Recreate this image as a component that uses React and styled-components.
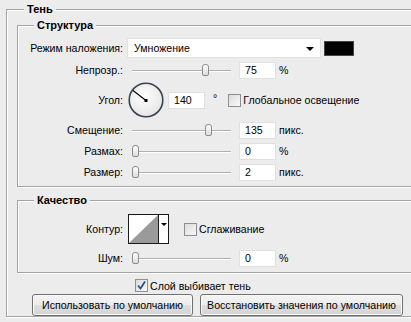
import React from 'react';
import styled, { createGlobalStyle } from 'styled-components';

const GlobalStyle = createGlobalStyle`
  html, body { margin: 0; padding: 0; background: #ececec; }
  body {
    font-family: "Liberation Sans", Arial, sans-serif;
    font-size: 10.6px;
    color: #000;
  }
`;

const Dialog = styled.div`
  width: 411px;
  height: 322px;
  overflow: hidden;
  box-sizing: border-box;
  padding: 2px 0 0 6px;
  background: #ececec;
`;

const Group = styled.fieldset`
  margin: ${p => p.$mt || 0}px 0 0 0;
  padding: ${p => p.$pad};
  width: ${p => p.$w}px;
  min-width: 0;
  box-sizing: border-box;
  border: 1px solid #a3a3a3;
  box-shadow: inset 1px 1px 0 #fff, 1px 1px 0 #fff;
`;

const Legend = styled.legend`
  margin-left: ${p => p.$ml}px;
  padding: 0 3px;
  font-weight: bold;
  font-size: 11px;
  line-height: 14px;
  background: #ececec;
`;

const Form = styled.div`
  display: grid;
  grid-template-columns: 105px 1fr;
  grid-template-rows: ${p => p.$rows};
  column-gap: 4px;
  row-gap: ${p => p.$gap}px;
`;

const Label = styled.div`
  text-align: right;
  align-self: center;
  white-space: nowrap;
`;

const Controls = styled.div`
  display: flex;
  align-items: center;
`;

const Select = styled.div`
  position: relative;
  width: 194px;
  height: 20px;
  box-sizing: border-box;
  padding-left: 6px;
  display: flex;
  align-items: center;
  background: #fff;
  border: 1px solid #e2e2e2;
  &::after {
    content: '';
    position: absolute;
    right: 6px;
    top: 8px;
    border-left: 4px solid transparent;
    border-right: 4px solid transparent;
    border-top: 4px solid #000;
  }
`;

const Swatch = styled.div`
  margin-left: 3px;
  width: 30px;
  height: 15px;
  background: #000;
  border: 1px solid #444;
  box-sizing: border-box;
`;

const Slider = styled.div`
  position: relative;
  margin-left: ${p => p.$ml ?? 5}px;
  width: 99px;
  height: 14px;
  &::before {
    content: '';
    position: absolute;
    left: 0;
    right: 0;
    top: 7px;
    height: 1px;
    background: #b0b0b0;
    box-shadow: 0 1px 0 #fff;
  }
`;

const Thumb = styled.div`
  position: absolute;
  top: 1px;
  left: ${p => p.$pos}px;
  width: 7px;
  height: 12px;
  box-sizing: border-box;
  border: 1px solid #8c8c8c;
  border-radius: 3px 3px 2px 2px;
  background: linear-gradient(#ffffff, #dcdcdc);
`;

const Field = styled.div`
  margin-left: ${p => p.$ml ?? 8}px;
  width: 37px;
  height: 17px;
  box-sizing: border-box;
  padding-left: 5px;
  display: flex;
  align-items: center;
  background: #fff;
  border: 1px solid #e0e0e0;
`;

const Unit = styled.span`
  margin-left: ${p => p.$ml ?? 3}px;
  align-self: ${p => (p.$sup ? 'flex-start' : 'center')};
  margin-top: ${p => (p.$sup ? 10 : 0)}px;
`;

const Box = styled.span`
  display: inline-flex;
  align-items: center;
  justify-content: center;
  width: 13px;
  height: 13px;
  box-sizing: border-box;
  margin-left: ${p => p.$ml || 0}px;
  border: 1px solid #8e8f8f;
  background: linear-gradient(135deg, #dcdcdc, #f8f8f8);
`;

const CheckText = styled.span`
  margin-left: 2px;
`;

const CheckRow = styled.div`
  display: flex;
  align-items: center;
  height: 13px;
  margin: 6px 0 0 118px;
`;

const Buttons = styled.div`
  display: flex;
  gap: 7px;
  margin: 2px 0 0 15px;
`;

const Button = styled.button`
  width: ${p => p.$w}px;
  height: 22px;
  padding: 0;
  font-family: "Liberation Sans", Arial, sans-serif;
  font-size: 10.6px;
  color: #000;
  border: 1px solid #707070;
  border-radius: 3px;
  background: linear-gradient(#f4f4f4, #ececec 50%, #dedede 51%, #d4d4d4);
  box-shadow: inset 0 0 0 1px #fbfbfb;
`;

function Check({ checked, ml, children }) {
  return (
    <>
      <Box $ml={ml}>
        {checked && (
          <svg width="11" height="11" viewBox="0 0 11 11">
            <path d="M2 5.5 L4.5 8.5 L9 1.5" fill="none" stroke="#2d4f8a" strokeWidth="1.8" />
          </svg>
        )}
      </Box>
      <CheckText>{children}</CheckText>
    </>
  );
}

function Dial() {
  return (
    <svg width="36" height="36" viewBox="0 0 36 36" style={{ marginLeft: 1 }}>
      <defs>
        <radialGradient id="dialfill" cx="0.45" cy="0.4" r="0.65">
          <stop offset="0" stopColor="#ffffff" />
          <stop offset="1" stopColor="#e4e4e4" />
        </radialGradient>
      </defs>
      <circle cx="18" cy="18" r="16.8" fill="url(#dialfill)" stroke="#39434e" strokeWidth="1.6" />
      <line x1="18" y1="18.5" x2="5" y2="8.5" stroke="#000" strokeWidth="1.1" />
      <rect x="16.5" y="17" width="3" height="3" fill="#000" />
    </svg>
  );
}

function Contour() {
  return (
    <svg width="41" height="30" viewBox="0 0 41 30" style={{ marginLeft: 1 }}>
      <rect x="0.5" y="0.5" width="40" height="29" fill="#fff" stroke="#1a1a1a" />
      <polygon points="1,29 30,1 30,29" fill="#9a9a9a" />
      <line x1="30.5" y1="0.5" x2="30.5" y2="29.5" stroke="#1a1a1a" />
      <polygon points="33,9 39,9 36,12" fill="#000" />
    </svg>
  );
}

function SliderRow({ label, pos, value, unit }) {
  return (
    <>
      <Label>{label}</Label>
      <Controls>
        <Slider>
          <Thumb $pos={pos} />
        </Slider>
        <Field>{value}</Field>
        <Unit>{unit}</Unit>
      </Controls>
    </>
  );
}

export default function App() {
  return (
    <Dialog>
      <GlobalStyle />
      <Group $w={440} $pad="0 0 0 10px">
        <Legend $ml={7}>Тень</Legend>

        <Group $w={420} $mt={2} $pad="6px 0 5px 0">
          <Legend $ml={16}>Структура</Legend>
          <Form $rows="20px 18px 36px 18px 18px 18px" $gap={3}>
            <Label>Режим наложения:</Label>
            <Controls>
              <Select>Умножение</Select>
              <Swatch />
            </Controls>

            <SliderRow label="Непрозр.:" pos={70} value="75" unit="%" />

            <Label>Угол:</Label>
            <Controls>
              <Dial />
              <Field $ml={4}>140</Field>
              <Unit $ml={8} $sup>°</Unit>
              <Check ml={11}>Глобальное освещение</Check>
            </Controls>

            <SliderRow label="Смещение:" pos={73} value="135" unit="пикс." />
            <SliderRow label="Размах:" pos={0} value="0" unit="%" />
            <SliderRow label="Размер:" pos={0} value="2" unit="пикс." />
          </Form>
        </Group>

        <Group $w={420} $mt={6} $pad="7px 0 5px 0">
          <Legend $ml={16}>Качество</Legend>
          <Form $rows="30px 18px" $gap={5}>
            <Label>Контур:</Label>
            <Controls>
              <Contour />
              <Check ml={15}>Сглаживание</Check>
            </Controls>

            <SliderRow label="Шум:" pos={0} value="0" unit="%" />
          </Form>
        </Group>

        <CheckRow>
          <Check checked>Слой выбивает тень</Check>
        </CheckRow>

        <Buttons>
          <Button $w={161}>Использовать по умолчанию</Button>
          <Button $w={203}>Восстановить значения по умолчанию</Button>
        </Buttons>
      </Group>
    </Dialog>
  );
}
